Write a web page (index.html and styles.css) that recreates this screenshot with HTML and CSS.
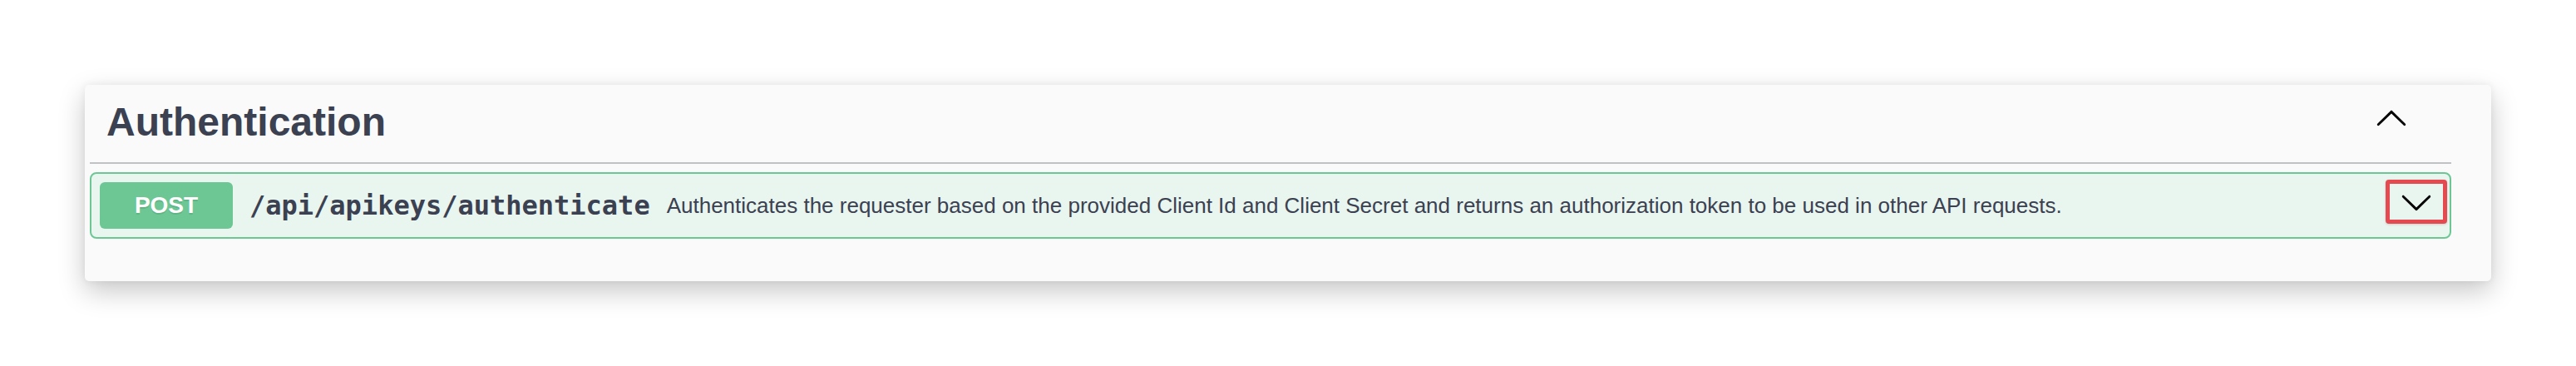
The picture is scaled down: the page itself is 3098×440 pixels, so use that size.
FILE: index.html
```html
<!DOCTYPE html>
<html lang="en">
<head>
  <meta charset="UTF-8">
  <title>Authentication - API</title>
  <link rel="stylesheet" href="styles.css">
</head>
<body>
  <div class="tag-section">
    <h3 class="tag-header">
      <span class="tag-name">Authentication</span>
      <svg class="arrow" viewBox="0 0 20 20" width="40" height="40" aria-hidden="true">
        <path transform="matrix(1 0 0 -1 0 21)" d="M17.418 6.109c.272-.268.709-.268.979 0s.271.701 0 .969l-7.908 7.83c-.27.268-.707.268-.979 0l-7.908-7.83c-.27-.268-.27-.701 0-.969.271-.268.709-.268.979 0L10 13.25l7.418-7.141z"/>
      </svg>
    </h3>

    <div class="opblock opblock-post">
      <div class="opblock-summary">
        <span class="method">POST</span>
        <span class="path">/api/apikeys/authenticate</span>
        <span class="description">Authenticates the requester based on the provided Client Id and Client Secret and returns an authorization token to be used in other API requests.</span>
        <button class="expand">
          <svg class="arrow" viewBox="0 0 20 20" width="40" height="40" aria-hidden="true">
            <path d="M17.418 6.109c.272-.268.709-.268.979 0s.271.701 0 .969l-7.908 7.83c-.27.268-.707.268-.979 0l-7.908-7.83c-.27-.268-.27-.701 0-.969.271-.268.709-.268.979 0L10 13.25l7.418-7.141z"/>
          </svg>
        </button>
      </div>
    </div>
  </div>
</body>
</html>
```

FILE: styles.css
```css
:root {
  --text-color: #3b4151;
  --post-color: #6cc794;
  --post-bg: #e9f5ef;
  --focus-color: #e44a50;
}
html {
  background: #fff;
}
body {
  margin: 0;
  padding: 102px 102px 102px;
  min-height: 440px;
  box-sizing: border-box;
  font-family: "Liberation Sans", Arial, sans-serif;
  color: var(--text-color);
}
.tag-section {
  background: #fafafa;
  border-radius: 5px;
  padding: 0 48px 51px 6px;
  box-shadow: 0 12px 32px rgba(0,0,0,0.22), 0 0 10px rgba(0,0,0,0.06);
}
.tag-header {
  display: flex;
  justify-content: space-between;
  align-items: flex-start;
  margin: 0;
  padding: 17px 52px 21px 20px;
  border-bottom: 2px solid rgba(59,65,81,0.3);
  font-size: 48px;
  line-height: 55px;
  font-weight: bold;
}
.tag-header .arrow {
  margin-top: 2px;
}
.arrow {
  display: block;
  fill: #000;
}
.opblock {
  margin-top: 10px;
  border: 2px solid var(--post-color);
  border-radius: 8px;
  background: var(--post-bg);
}
.opblock-summary {
  display: flex;
  align-items: center;
  padding: 10px 3px 10px 10px;
}
.method {
  width: 160px;
  flex-shrink: 0;
  padding: 12px 0;
  line-height: 32px;
  font-size: 28px;
  font-weight: bold;
  text-align: center;
  color: #fff;
  background: var(--post-color);
  border-radius: 6px;
  text-shadow: 0 2px 0 rgba(0,0,0,0.1);
}
.path {
  padding: 0 20px;
  font-family: "DejaVu Sans Mono", "Liberation Mono", monospace;
  font-size: 32px;
  font-weight: bold;
}
.description {
  flex: 1;
  font-size: 26px;
}
.expand {
  align-self: flex-start;
  margin-top: -3px;
  padding: 2px 12px 1px;
  border: 5px solid var(--focus-color);
  border-radius: 4px;
  background: transparent;
  box-shadow: 0 1px 3px rgba(0,0,0,0.15);
}
```
